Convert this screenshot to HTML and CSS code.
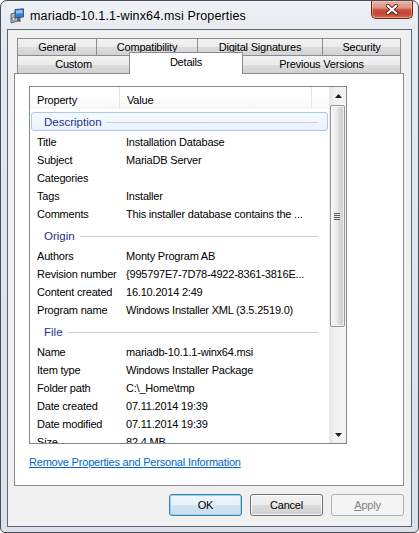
FILE: index.html
```html
<!DOCTYPE html>
<html>
<head>
<meta charset="utf-8">
<link rel="stylesheet" href="styles.css">
</head>
<body>
<div class="window">
  <div class="titlebar">
    <svg class="app-icon" width="16" height="16" viewBox="0 0 16 16">
      <path d="M2 6 L9 4 L9 13 L2 15 Z" fill="#b9bec4" stroke="#3c4046" stroke-width="0.8"/>
      <path d="M9 4 L11 5 L11 13.5 L9 13 Z" fill="#7d848c" stroke="#3c4046" stroke-width="0.8"/>
      <path d="M6 1.5 L14.5 0.8 L14.5 9 L6 9.8 Z" fill="#3c7ed8" stroke="#1d3f78" stroke-width="0.8"/>
      <path d="M7 2.6 L13.5 2 L13.5 5 L7 5.6 Z" fill="#8fc3f5"/>
      <circle cx="4.5" cy="11" r="1.6" fill="#e4e7ea" stroke="#3c4046" stroke-width="0.6"/>
    </svg>
    <span class="title">mariadb-10.1.1-winx64.msi Properties</span>
    <div class="close">
      <svg width="42" height="17" viewBox="0 0 42 17">
        <path d="M16.5 4.5 L25.5 12.5 M25.5 4.5 L16.5 12.5" stroke="#4a1a12" stroke-width="4" stroke-linecap="round"/>
        <path d="M16.5 4.5 L25.5 12.5 M25.5 4.5 L16.5 12.5" stroke="#ffffff" stroke-width="2.2" stroke-linecap="round"/>
      </svg>
    </div>
  </div>
  <div class="client">
    <div class="tabs">
      <div class="tabrow">
        <div class="tab w-general">General</div>
        <div class="tab w-compat">Compatibility</div>
        <div class="tab w-digital">Digital Signatures</div>
        <div class="tab w-security">Security</div>
      </div>
      <div class="tabrow">
        <div class="tab row2 w-custom">Custom</div>
        <div class="tab row2 selected w-details">Details</div>
        <div class="tab row2 w-prev">Previous Versions</div>
      </div>
    </div>
    <div class="panel">
      <div class="listview">
        <div class="lv-main">
          <div class="lv-header">
            <div class="hcol hprop">Property</div>
            <div class="hcol hval">Value</div>
          </div>
          <div class="group">
            <div class="gbox focused"><span class="gtext">Description</span><span class="gline"></span></div>
          </div>
          <div class="row"><span class="k">Title</span><span class="v">Installation Database</span></div>
          <div class="row"><span class="k">Subject</span><span class="v">MariaDB Server</span></div>
          <div class="row"><span class="k">Categories</span><span class="v"></span></div>
          <div class="row"><span class="k">Tags</span><span class="v">Installer</span></div>
          <div class="row"><span class="k">Comments</span><span class="v">This installer database contains the ...</span></div>
          <div class="group">
            <div class="gbox"><span class="gtext">Origin</span><span class="gline"></span></div>
          </div>
          <div class="row"><span class="k">Authors</span><span class="v">Monty Program AB</span></div>
          <div class="row"><span class="k">Revision number</span><span class="v">{995797E7-7D78-4922-8361-3816E...</span></div>
          <div class="row"><span class="k">Content created</span><span class="v">16.10.2014 2:49</span></div>
          <div class="row"><span class="k">Program name</span><span class="v">Windows Installer XML (3.5.2519.0)</span></div>
          <div class="group">
            <div class="gbox"><span class="gtext">File</span><span class="gline"></span></div>
          </div>
          <div class="row"><span class="k">Name</span><span class="v">mariadb-10.1.1-winx64.msi</span></div>
          <div class="row"><span class="k">Item type</span><span class="v">Windows Installer Package</span></div>
          <div class="row"><span class="k">Folder path</span><span class="v">C:\_Home\tmp</span></div>
          <div class="row"><span class="k">Date created</span><span class="v">07.11.2014 19:39</span></div>
          <div class="row"><span class="k">Date modified</span><span class="v">07.11.2014 19:39</span></div>
          <div class="row"><span class="k">Size</span><span class="v">82,4 MB</span></div>
        </div>
        <div class="scrollbar">
          <div class="sb-btn"><svg width="7" height="4" viewBox="0 0 7 4"><path d="M0 4 L3.5 0 L7 4 Z" fill="#1a1a1a"/></svg></div>
          <div class="sb-thumb"><span class="grip"></span></div>
          <div class="sb-track"></div>
          <div class="sb-btn"><svg width="7" height="4" viewBox="0 0 7 4"><path d="M0 0 L3.5 4 L7 0 Z" fill="#1a1a1a"/></svg></div>
        </div>
      </div>
      <a class="link" href="#">Remove Properties and Personal Information</a>
    </div>
    <div class="buttons">
      <div class="btn default">OK</div>
      <div class="btn">Cancel</div>
      <div class="btn disabled"><u>A</u>pply</div>
    </div>
  </div>
</div>
</body>
</html>
```
FILE: styles.css
```css
* { box-sizing: border-box; }
html, body { margin: 0; padding: 0; background: #ffffff; }
body {
  font-family: "Liberation Sans", Arial, sans-serif;
  font-size: 11px;
  letter-spacing: -0.2px;
  color: #000;
}
.window {
  width: 419px;
  height: 533px;
  border: 1px solid #4a4f57;
  border-radius: 7px 7px 5px 5px;
  background: linear-gradient(180deg, #eef2f6 0, #e4e9ef 40px, #dae1e9 100%);
  display: flex;
  flex-direction: column;
  overflow: hidden;
}
.titlebar {
  height: 28px;
  flex: none;
  display: flex;
  align-items: center;
  padding-left: 8px;
}
.app-icon { flex: none; margin-top: 2px; }
.title {
  margin-left: 5px;
  margin-top: 2px;
  font-size: 12.5px;
  letter-spacing: 0.15px;
  color: #000;
}
.close {
  margin-left: auto;
  margin-right: 5px;
  align-self: flex-start;
  width: 42px;
  height: 18px;
  border: 1px solid #6b2a20;
  border-top: none;
  border-radius: 0 0 5px 5px;
  background: linear-gradient(180deg, #eab3a6 0, #dd9484 40%, #c8523e 52%, #c5432f 75%, #d8714f 100%);
  box-shadow: inset 0 0 0 1px rgba(255, 210, 200, 0.45);
  display: flex;
  align-items: center;
  justify-content: center;
}
.close svg { display: block; }
.client {
  flex: none;
  height: 498px;
  margin: 0 6px;
  border: 1px solid #5d6672;
  background: #f0f0f0;
  display: flex;
  flex-direction: column;
}
.tabs {
  padding-top: 8px;
  padding-left: 9px;
}
.tabrow {
  display: flex;
  align-items: flex-start;
}
.tab {
  height: 17px;
  border: 1px solid #898c95;
  border-bottom: none;
  margin-right: -1px;
  background: linear-gradient(180deg, #f3f3f3 0, #ebebeb 50%, #dddddd 50%, #d2d2d2 100%);
  text-align: center;
  line-height: 16px;
}
.tab.row2 { height: 18px; line-height: 17px; }
.tab.selected {
  height: 22px;
  margin-top: -3px;
  margin-bottom: -1px;
  background: #ffffff;
  line-height: 18px;
  position: relative;
  z-index: 2;
}
.w-general { width: 80px; }
.w-compat { width: 102px; }
.w-digital { width: 126px; }
.w-security { width: 79px; }
.w-custom { width: 113px; }
.w-details { width: 114px; }
.w-prev { width: 159px; }

.panel {
  margin-left: 6px;
  width: 390px;
  height: 413px;
  border: 1px solid #898c95;
  background: #ffffff;
  padding: 12px 0 0 14px;
  display: flex;
  flex-direction: column;
  align-items: flex-start;
}
.listview {
  width: 318px;
  height: 358px;
  flex: none;
  border: 1px solid #828790;
  display: flex;
  overflow: hidden;
}
.lv-main {
  flex: 1;
  min-width: 0;
  overflow: hidden;
  display: flex;
  flex-direction: column;
}
.lv-header {
  height: 22px;
  flex: none;
  display: flex;
  background: linear-gradient(180deg, #ffffff 0, #ffffff 45%, #f5f6f8 100%);
}
.hcol {
  height: 22px;
  border-right: 1px solid #e4e5e8;
  padding-left: 7px;
  padding-top: 6px;
  line-height: 14px;
}
.hprop { width: 90px; }
.hval { width: 192px; }

.group {
  height: 24px;
  flex: none;
  padding: 3px 1px 2px 1px;
}
.gbox {
  height: 19px;
  border: 1px solid transparent;
  border-radius: 3px;
  display: flex;
  align-items: center;
  padding-left: 12px;
}
.gbox.focused {
  border-color: #a9c9ee;
  background: linear-gradient(180deg, #f6faff 0, #eaf2fc 100%);
}
.gtext {
  color: #1e3287;
  font-size: 11.5px;
  letter-spacing: 0;
}
.gline {
  flex: 1;
  height: 1px;
  background: #c3cfdf;
  margin: 1px 9px 0 5px;
}
.row {
  height: 18px;
  flex: none;
  display: flex;
  align-items: center;
  white-space: nowrap;
}
.k {
  width: 89px;
  flex: none;
  padding-left: 7px;
}
.v {
  padding-left: 7px;
}

.scrollbar {
  width: 17px;
  flex: none;
  display: flex;
  flex-direction: column;
  background: linear-gradient(90deg, #e6e6e6 0, #f1f1f1 30%, #f4f4f4 100%);
  border-left: 1px solid #eaeaea;
}
.sb-btn {
  height: 17px;
  flex: none;
  display: flex;
  align-items: center;
  justify-content: center;
}
.sb-btn svg { display: block; }
.sb-thumb {
  height: 222px;
  flex: none;
  margin: 1px 1px 0 0;
  border: 1px solid #979797;
  border-radius: 2px;
  background: linear-gradient(90deg, #f7f7f7 0, #ececec 45%, #dcdcdc 55%, #cfcfcf 100%);
  box-shadow: inset 0 0 0 1px rgba(255, 255, 255, 0.7);
  display: flex;
  align-items: center;
  justify-content: center;
}
.grip {
  width: 6px;
  height: 7px;
  margin-left: -1px;
  background: repeating-linear-gradient(180deg, #5a5a5a 0, #5a5a5a 1px, #e6e6e6 1px, #e6e6e6 2px);
}
.sb-track { flex: 1; }

.link {
  margin-top: 11px;
  color: #0066cc;
  text-decoration: underline;
  line-height: 14px;
}
.buttons {
  margin-top: 8px;
  display: flex;
  justify-content: flex-end;
  gap: 8px;
  padding-right: 7px;
}
.btn {
  width: 73px;
  height: 22px;
  border: 1px solid #707070;
  border-radius: 3px;
  background: linear-gradient(180deg, #f2f2f2 0, #ebebeb 50%, #dddddd 50%, #cfcfcf 100%);
  box-shadow: inset 0 0 0 1px rgba(255, 255, 255, 0.8);
  display: flex;
  align-items: center;
  justify-content: center;
  line-height: 14px;
}
.btn.default {
  border-color: #3c7fb1;
  box-shadow: inset 0 0 0 1px #93d4f5;
  background: linear-gradient(180deg, #f0f7fb 0, #e6f0f7 50%, #d4e6f2 50%, #c6dcec 100%);
}
.btn.disabled {
  border-color: #adb2b5;
  background: #f4f4f4;
  box-shadow: none;
  color: #838383;
}
```
